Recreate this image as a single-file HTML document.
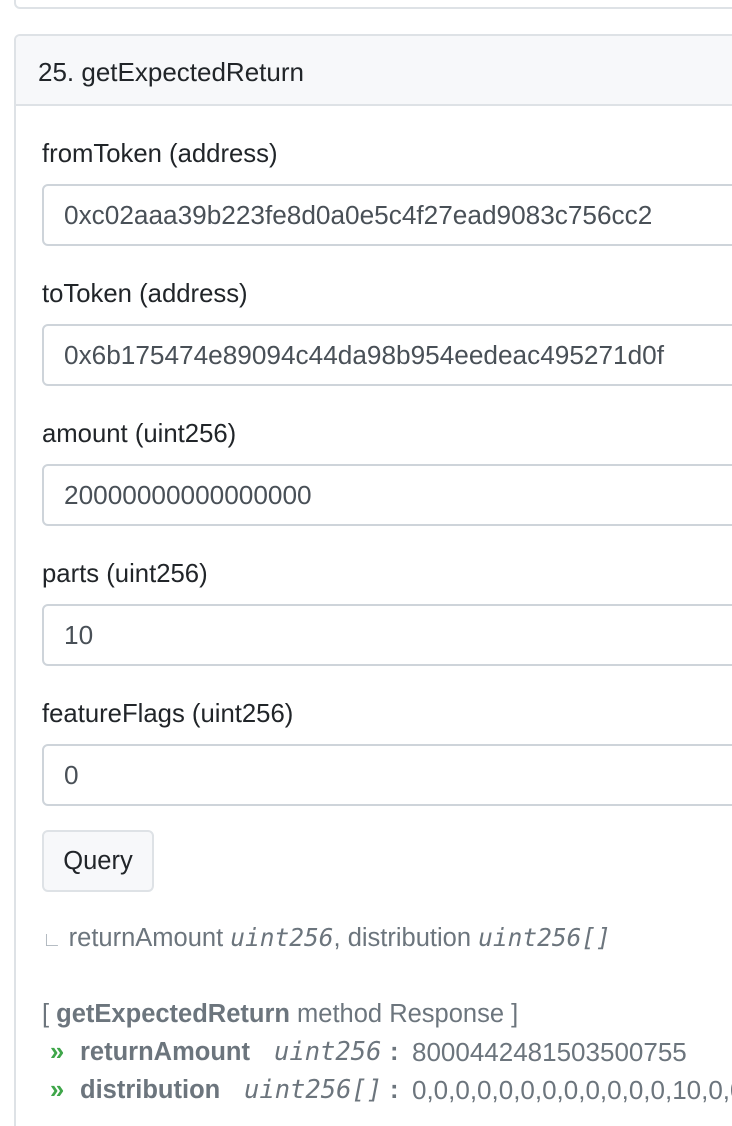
<!DOCTYPE html>
<html><head><style>
html,body{margin:0;padding:0;background:#fff;width:732px;height:1124px;overflow:hidden;font-family:"Liberation Sans",sans-serif;color:#212529;}
.card0{position:absolute;left:14px;top:-20px;width:800px;height:25px;border:2px solid #dee2e6;border-radius:6px;}
.card{position:absolute;left:14px;top:34px;width:800px;height:1090px;border:2px solid #dee2e6;border-bottom:none;border-radius:6px 6px 0 0;overflow:hidden;}
.hdr{height:68px;background:#f7f8fa;border-bottom:2px solid #dee2e6;font-size:26px;line-height:72px;padding-left:22px;color:#212529;}
.lbl{position:absolute;left:26px;font-size:25.7px;line-height:30px;}
.inp{position:absolute;left:26px;width:800px;border:2px solid #ced4da;border-radius:6px;font-size:26.2px;line-height:58px;padding-left:20px;box-sizing:border-box;height:62px;color:#495057;}
.btn{position:absolute;left:26px;top:794px;width:112px;height:62px;box-sizing:border-box;border:2px solid #dee2e6;border-radius:6px;background:#f7f8fa;font-size:25.5px;line-height:58px;text-align:center;color:#212529;}
.m{font-family:"DejaVu Sans Mono","Liberation Mono",monospace;font-style:italic;font-size:22.5px;}
.g{color:#6c757d;font-size:25.5px;position:absolute;white-space:nowrap;line-height:30px;}
.ar{color:#3fa64a;font-weight:bold;}
</style></head><body>
<div class="card0"></div>
<div class="card">
<div class="hdr">25. getExpectedReturn</div>
<div class="lbl" style="top:103px">fromToken (address)</div>
<div class="inp" style="top:148px">0xc02aaa39b223fe8d0a0e5c4f27ead9083c756cc2</div>
<div class="lbl" style="top:243px">toToken (address)</div>
<div class="inp" style="top:288px">0x6b175474e89094c44da98b954eedeac495271d0f</div>
<div class="lbl" style="top:383px">amount (uint256)</div>
<div class="inp" style="top:428px">20000000000000000</div>
<div class="lbl" style="top:523px">parts (uint256)</div>
<div class="inp" style="top:568px">10</div>
<div class="lbl" style="top:663px">featureFlags (uint256)</div>
<div class="inp" style="top:708px">0</div>
<div class="btn">Query</div>
<div class="g" style="left:26px;top:887px"><span style="color:#adb5bd;font-size:20px">∟</span> returnAmount <span class="m" style="font-size:24.5px">uint256</span>, distribution <span class="m" style="font-size:24.5px">uint256[]</span></div>
<div class="g" style="left:26px;top:963px">[ <b>getExpectedReturn</b> method Response ]</div>
<div class="g ar" style="left:34px;top:1001px">»</div>
<div class="g" style="left:64px;top:1001px"><b>returnAmount</b></div>
<div class="g m" style="left:258px;top:1001px">uint256</div>
<div class="g" style="left:374px;top:1001px"><b>:</b></div>
<div class="g" style="left:396px;top:1001px;font-size:26px">8000442481503500755</div>
<div class="g ar" style="left:34px;top:1039px">»</div>
<div class="g" style="left:64px;top:1039px"><b>distribution</b></div>
<div class="g m" style="left:228px;top:1039px">uint256[]</div>
<div class="g" style="left:374px;top:1039px"><b>:</b></div>
<div class="g" style="left:396px;top:1039px;font-size:26px">0,0,0,0,0,0,0,0,0,0,0,0,10,0,0,0</div>
</div>
</body></html>
